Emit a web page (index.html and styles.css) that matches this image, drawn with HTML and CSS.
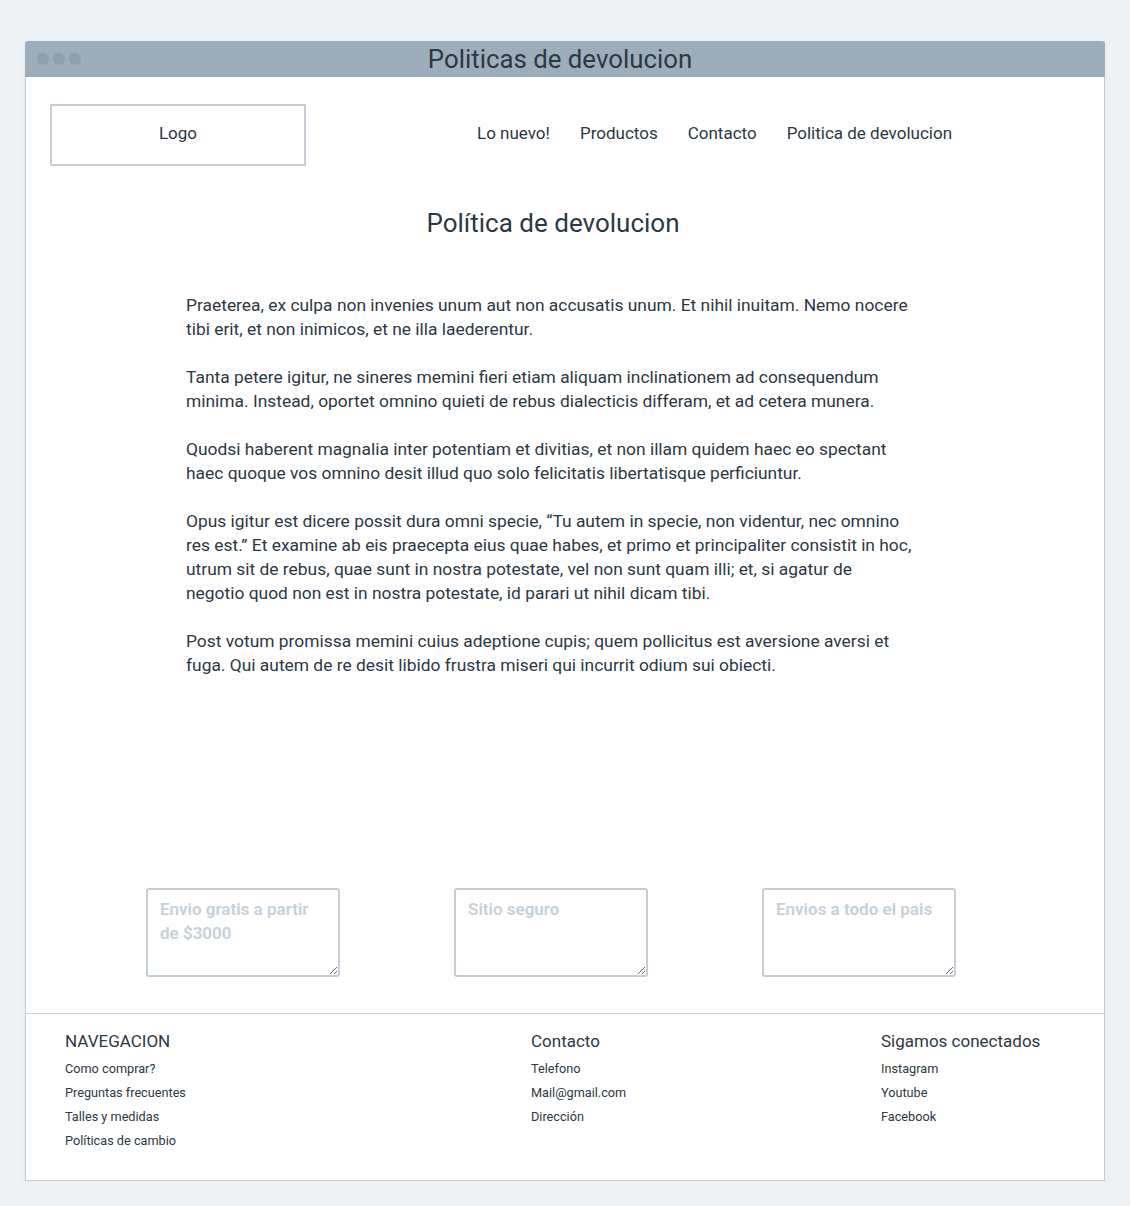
FILE: index.html
```html
<!DOCTYPE html>
<html lang="es">
<head>
<meta charset="utf-8">
<title>Politicas de devolucion</title>
<link rel="stylesheet" href="styles.css">
</head>
<body>
<div class="window">
  <div class="titlebar">
    <div class="dots"><span></span><span></span><span></span></div>
    <div class="title">Politicas de devolucion</div>
  </div>
  <header class="header">
    <div class="logo">Logo</div>
    <nav class="nav">
      <a>Lo nuevo!</a>
      <a>Productos</a>
      <a>Contacto</a>
      <a>Politica de devolucion</a>
    </nav>
  </header>
  <main class="main">
    <h1 class="heading">Política de devolucion</h1>
    <div class="text">
      <p>Praeterea, ex culpa non invenies unum aut non accusatis unum. Et nihil inuitam. Nemo nocere tibi erit, et non inimicos, et ne illa laederentur.</p>
      <p>Tanta petere igitur, ne sineres memini fieri etiam aliquam inclinationem ad consequendum minima. Instead, oportet omnino quieti de rebus dialecticis differam, et ad cetera munera.</p>
      <p>Quodsi haberent magnalia inter potentiam et divitias, et non illam quidem haec eo spectant haec quoque vos omnino desit illud quo solo felicitatis libertatisque perficiuntur.</p>
      <p>Opus igitur est dicere possit dura omni specie, “Tu autem in specie, non videntur, nec omnino res est.” Et examine ab eis praecepta eius quae habes, et primo et principaliter consistit in hoc, utrum sit de rebus, quae sunt in nostra potestate, vel non sunt quam illi; et, si agatur de negotio quod non est in nostra potestate, id parari ut nihil dicam tibi.</p>
      <p>Post votum promissa memini cuius adeptione cupis; quem pollicitus est aversione aversi et fuga. Qui autem de re desit libido frustra miseri qui incurrit odium sui obiecti.</p>
    </div>
    <div class="features">
      <textarea class="feature" placeholder="Envio gratis a partir de $3000"></textarea>
      <textarea class="feature" placeholder="Sitio seguro"></textarea>
      <textarea class="feature" placeholder="Envios a todo el pais"></textarea>
    </div>
  </main>
  <footer class="footer">
    <div class="col col-nav">
      <h3>NAVEGACION</h3>
      <a>Como comprar?</a>
      <a>Preguntas frecuentes</a>
      <a>Talles y medidas</a>
      <a>Políticas de cambio</a>
    </div>
    <div class="col col-contact">
      <h3>Contacto</h3>
      <a>Telefono</a>
      <a>Mail@gmail.com</a>
      <a>Dirección</a>
    </div>
    <div class="col col-social">
      <h3>Sigamos conectados</h3>
      <a>Instagram</a>
      <a>Youtube</a>
      <a>Facebook</a>
    </div>
  </footer>
</div>
</body>
</html>
```
FILE: styles.css
```css
* { box-sizing: border-box; }
html, body { margin: 0; padding: 0; }
body {
  background: #eef2f5;
  font-family: Roboto, "Liberation Sans", sans-serif;
  color: #2b3846;
  padding: 41px 25px 0 25px;
}
.window {
  width: 1080px;
  height: 1140px;
  background: #fff;
  border: 1px solid #c3ced8;
  border-top: none;
  border-radius: 3px 3px 0 0;
  box-shadow: 0 2px 6px rgba(40, 60, 80, 0.06);
  display: flex;
  flex-direction: column;
}
.titlebar {
  height: 36px;
  background: #9eadba;
  border-radius: 3px 3px 0 0;
  margin: 0 -1px;
  display: flex;
  align-items: center;
  position: relative;
}
.dots {
  display: flex;
  gap: 4px;
  padding-left: 12px;
}
.dots span {
  width: 12px;
  height: 12px;
  border-radius: 50%;
  background: #8e9eac;
}
.title {
  position: absolute;
  left: 0; right: 10px;
  text-align: center;
  font-size: 25.8px;
  color: #2b3846;
  line-height: 36px;
}
.header {
  display: flex;
  align-items: center;
  padding: 27px 0 0 24px;
}
.logo {
  width: 256px;
  height: 62px;
  border: 2px solid #c3ced8;
  display: flex;
  align-items: center;
  justify-content: center;
  font-size: 17px;
  padding-bottom: 4px;
}
.nav {
  display: flex;
  gap: 30px;
  margin-left: 171px;
  margin-bottom: 4px;
  font-size: 17px;
}
.main {
  flex: 1;
  display: flex;
  flex-direction: column;
  align-items: center;
  padding-right: 24px;
}
.heading {
  font-weight: normal;
  font-size: 26px;
  line-height: 32px;
  margin: 41px 0 0 0;
}
.text {
  width: 728px;
  margin: 54px 6px 0 0;
  font-size: 17.4px;
  line-height: 24px;
}
.text p { margin: 0 0 24px 0; }
.features {
  margin-top: auto;
  margin-bottom: 36px;
  margin-right: 4px;
  display: flex;
  gap: 114px;
}
.feature {
  width: 194px;
  height: 89px;
  border: 2px solid #c3ced8;
  border-radius: 3px;
  padding: 7px 12px;
  font-family: inherit;
  font-size: 17px;
  line-height: 24px;
  font-weight: 600;
  resize: both;
  outline: none;
}
.feature::placeholder { color: #c5d0da; }
.footer {
  border-top: 1px solid #c3ced8;
  height: 167px;
  display: flex;
  padding: 15px 0 0 39px;
}
.col {
  display: flex;
  flex-direction: column;
}
.col-nav { width: 466px; }
.col-contact { width: 350px; }
.col h3 {
  margin: 0 0 4px 0;
  font-weight: normal;
  font-size: 17px;
  line-height: 24px;
}
.col a {
  font-size: 12.7px;
  line-height: 24px;
}
```
